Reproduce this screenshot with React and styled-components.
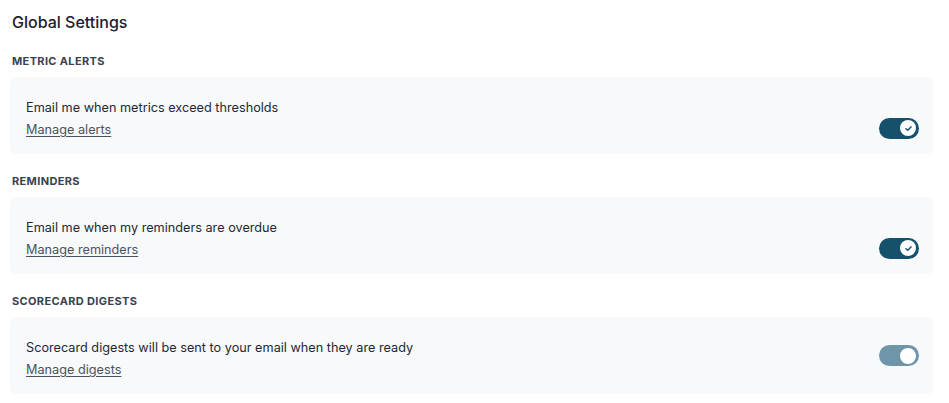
import React from "react";
import styled, { createGlobalStyle } from "styled-components";

const GlobalStyle = createGlobalStyle`
  html, body { margin: 0; padding: 0; background: #ffffff; }
  body { font-family: Inter, "Noto Sans", sans-serif; color: #1f2933; }
`;

const Page = styled.div`
  padding: 11px 16px 0 10px;
  display: flex;
  flex-direction: column;
`;

const Title = styled.h1`
  margin: 0 0 0 2px;
  font-size: 16px;
  line-height: 22px;
  font-weight: 500;
  color: #1a202c;
`;

const Section = styled.section`
  display: flex;
  flex-direction: column;
  margin-top: ${(p) => (p.$first ? "21px" : "20px")};
`;

const SectionLabel = styled.h2`
  margin: 0 0 0 2px;
  font-size: 11px;
  line-height: 14px;
  font-weight: 700;
  letter-spacing: 0.35px;
  text-transform: uppercase;
  color: #3a4150;
`;

const Card = styled.div`
  margin-top: 9px;
  height: 77px;
  box-sizing: border-box;
  padding: 0 14px 0 16px;
  background: #f7f9fb;
  border-radius: 6px;
  display: flex;
  align-items: center;
  justify-content: space-between;
`;

const Copy = styled.div`
  align-self: flex-start;
  display: flex;
  flex-direction: column;
  align-items: flex-start;
  gap: 4px;
  padding-top: 22px;
`;

const Description = styled.p`
  margin: 0;
  font-size: 12.7px;
  line-height: 18px;
  color: #1f2933;
`;

const ManageLink = styled.a`
  font-size: 12.7px;
  line-height: 18px;
  color: #4a5362;
  text-decoration: underline;
  text-underline-offset: 2px;
  cursor: pointer;
`;

const Track = styled.button`
  position: relative;
  width: 40px;
  height: 21px;
  margin-top: ${(p) => (p.$on ? "25px" : "0")};
  padding: 0;
  border: none;
  border-radius: 11px;
  background: ${(p) => (p.$on ? "#15516b" : "#6f95a8")};
  cursor: pointer;
  flex-shrink: 0;
`;

const Knob = styled.span`
  position: absolute;
  top: 2.5px;
  left: 21px;
  width: 16px;
  height: 16px;
  border-radius: 50%;
  background: #ffffff;
  display: flex;
  align-items: center;
  justify-content: center;
`;

function Toggle({ on }) {
  return (
    <Track $on={on} role="switch" aria-checked={on}>
      <Knob>
        {on && (
          <svg width="9" height="9" viewBox="0 0 10 10" fill="none">
            <path
              d="M2.2 5.2 L4.2 7 L7.8 3.2"
              stroke="#15516b"
              strokeWidth="1.6"
              strokeLinecap="round"
              strokeLinejoin="round"
            />
          </svg>
        )}
      </Knob>
    </Track>
  );
}

const settings = [
  {
    label: "Metric Alerts",
    text: "Email me when metrics exceed thresholds",
    link: "Manage alerts",
    on: true,
  },
  {
    label: "Reminders",
    text: "Email me when my reminders are overdue",
    link: "Manage reminders",
    on: true,
  },
  {
    label: "Scorecard Digests",
    text: "Scorecard digests will be sent to your email when they are ready",
    link: "Manage digests",
    on: false,
  },
];

export default function App() {
  return (
    <>
      <GlobalStyle />
      <Page>
        <Title>Global Settings</Title>
        {settings.map((s, i) => (
          <Section key={s.label} $first={i === 0}>
            <SectionLabel>{s.label}</SectionLabel>
            <Card>
              <Copy>
                <Description>{s.text}</Description>
                <ManageLink>{s.link}</ManageLink>
              </Copy>
              <Toggle on={s.on} />
            </Card>
          </Section>
        ))}
      </Page>
    </>
  );
}
